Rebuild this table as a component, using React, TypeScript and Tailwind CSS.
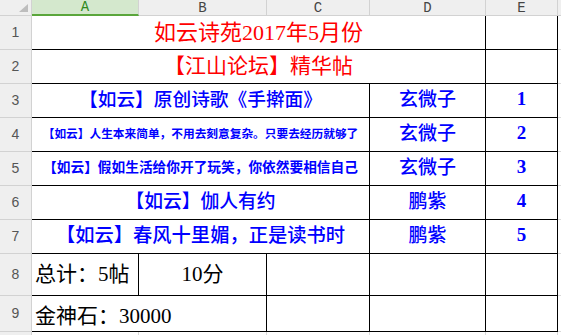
import React from "react";

const serif = "font-['Liberation_Serif','Noto_Sans_CJK_SC',serif]";

function RowHead({ n }: { n: string }) {
  return (
    <div className="bg-[#efefef] border-r border-b border-[#d2d2d2] flex items-center justify-center text-[14px] text-[#555] font-['Liberation_Sans',sans-serif]">
      {n}
    </div>
  );
}

function ColHead({ label }: { label: string }) {
  return (
    <div className="bg-[#efefef] border-r border-b border-[#d2d2d2] flex items-center justify-center text-[14px] leading-none text-[#444] font-['Liberation_Mono',monospace]">
      {label}
    </div>
  );
}

function Gap() {
  return <div className="border-b border-[#dadada]" />;
}

function App() {
  const posts = [
    { title: "【如云】原创诗歌《手擀面》", size: "text-[18.7px] font-medium", who: "玄微子", no: "1" },
    { title: "【如云】人生本来简单，不用去刻意复杂。只要去经历就够了", size: "text-[11.7px] font-bold", who: "玄微子", no: "2" },
    { title: "【如云】假如生活给你开了玩笑，你依然要相信自己", size: "text-[13.7px] font-bold", who: "玄微子", no: "3" },
    { title: "【如云】伽人有约", size: "text-[18.8px] font-medium", who: "鹏紫", no: "4" },
    { title: "【如云】春风十里媚，正是读书时", size: "text-[19.3px] font-medium", who: "鹏紫", no: "5" },
  ];

  return (
    <div className="w-[561px] h-[335px] overflow-hidden bg-white">
      <div className="grid h-full grid-cols-[32px_107px_128px_103px_116px_72px_1fr] grid-rows-[16px_34px_34px_34px_34px_34px_34px_34px_42px_36px_1fr]">
        {/* header row */}
        <div className="bg-[#efefef] border-r border-b border-[#d2d2d2] flex items-start justify-end pt-[4px] pr-[3px]">
          <svg width="9" height="8" viewBox="0 0 9 8">
            <polygon points="9,0 9,8 0,8" fill="#bdbdbd" />
          </svg>
        </div>
        <div className="bg-[#d4e8cd] border-r border-[#d2d2d2] border-b-2 border-b-[#5aa63b] flex items-center justify-center text-[14px] leading-none text-[#2f8a1c] font-['Liberation_Mono',monospace]">
          A
        </div>
        <ColHead label="B" />
        <ColHead label="C" />
        <ColHead label="D" />
        <ColHead label="E" />
        <div className="bg-[#efefef] border-b border-[#d2d2d2]" />

        {/* row 1 */}
        <RowHead n="1" />
        <div className={`col-span-4 border-r border-b border-black flex items-center justify-center text-[22px] text-[#ff0000] ${serif}`}>
          如云诗苑2017年5月份
        </div>
        <div className="border-r border-b border-black" />
        <Gap />

        {/* row 2 */}
        <RowHead n="2" />
        <div className={`col-span-4 border-r border-b border-black flex items-center justify-center text-[21px] text-[#ff0000] ${serif}`}>
          【江山论坛】精华帖
        </div>
        <div className="border-r border-b border-black" />
        <Gap />

        {/* rows 3-7 */}
        {posts.map((p, i) => (
          <React.Fragment key={p.no}>
            <RowHead n={String(i + 3)} />
            <div className={`col-span-3 border-r border-b border-black flex items-center justify-center whitespace-nowrap text-[#0000ff] ${p.size} ${serif}`}>
              {p.title}
            </div>
            <div className={`border-r border-b border-black flex items-center justify-center text-[19px] font-medium text-[#0000ff] ${serif}`}>
              {p.who}
            </div>
            <div className={`border-r border-b border-black flex items-center justify-center pb-[3px] text-[19px] font-bold text-[#0000ff] ${serif}`}>
              {p.no}
            </div>
            <Gap />
          </React.Fragment>
        ))}

        {/* row 8 */}
        <RowHead n="8" />
        <div className={`border-r border-b border-black flex items-center pl-[3px] whitespace-nowrap text-[21px] text-black ${serif}`}>
          总计：5帖
        </div>
        <div className={`border-r border-b border-black flex items-center justify-center text-[21px] text-black ${serif}`}>
          10分
        </div>
        <div className="border-r border-b border-black" />
        <div className="border-r border-b border-black" />
        <div className="border-r border-b border-black" />
        <Gap />

        {/* row 9 */}
        <RowHead n="9" />
        <div className={`col-span-2 border-r border-b border-black flex items-center pl-[3px] pt-[6px] whitespace-nowrap text-[21px] text-black ${serif}`}>
          金神石：30000
        </div>
        <div className="border-r border-b border-black" />
        <div className="border-r border-b border-black" />
        <div className="border-r border-b border-black" />
        <Gap />

        {/* row 10, only its top edge is in view */}
        <div className="bg-[#efefef] border-r border-[#d2d2d2]" />
        <div className="border-r border-[#dadada]" />
        <div className="border-r border-[#dadada]" />
        <div className="border-r border-[#dadada]" />
        <div className="border-r border-[#dadada]" />
        <div className="border-r border-[#dadada]" />
        <div />
      </div>
    </div>
  );
}

export default App;
